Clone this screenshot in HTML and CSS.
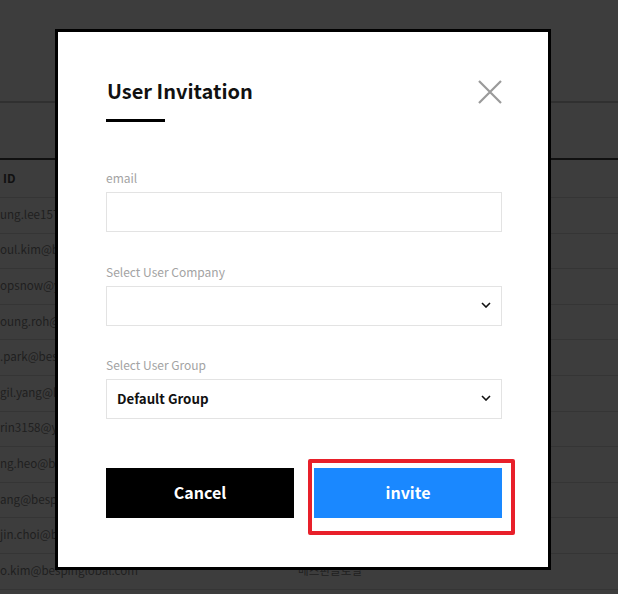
FILE: index.html
```html
<!DOCTYPE html>
<html lang="en">
<head>
<meta charset="utf-8">
<title>User Invitation</title>
<link rel="stylesheet" href="styles.css">
</head>
<body>
<div class="page">
  <div class="topbar"></div>
  <div class="toolbar"></div>
  <div class="thead"><span class="th">ID</span></div>
  <div class="row"><span class="cell">ung.lee157</span><span class="cell"></span></div>
  <div class="row"><span class="cell">oul.kim@b</span><span class="cell"></span></div>
  <div class="row"><span class="cell">opsnow@y</span><span class="cell"></span></div>
  <div class="row"><span class="cell">oung.roh@</span><span class="cell"></span></div>
  <div class="row"><span class="cell">.park@bes</span><span class="cell"></span></div>
  <div class="row"><span class="cell">gil.yang@b</span><span class="cell"></span></div>
  <div class="row"><span class="cell">rin3158@y</span><span class="cell"></span></div>
  <div class="row"><span class="cell">ng.heo@be</span><span class="cell"></span></div>
  <div class="row"><span class="cell">ang@besp</span><span class="cell"></span></div>
  <div class="row"><span class="cell">jin.choi@b</span><span class="cell"></span></div>
  <div class="row"><span class="cell">o.kim@bespinglobal.com</span><span class="cell">베스핀글로벌</span></div>
</div>

<div class="modal">
  <div class="modal-head">
    <h1 class="title">User Invitation</h1>
    <svg class="close" width="24" height="24" viewBox="0 0 24 24"><path d="M1 1L23 23M23 1L1 23" stroke="#9a9a9a" stroke-width="2.2" fill="none"/></svg>
  </div>
  <div class="title-bar"></div>

  <div class="field first">
    <label class="label">email</label>
    <div class="input"></div>
  </div>
  <div class="field">
    <label class="label">Select User Company</label>
    <div class="input select">
      <span class="value"></span>
      <svg class="chev" width="10" height="6" viewBox="0 0 10 6"><path d="M1 1L5 5L9 1" stroke="#111" stroke-width="1.6" fill="none"/></svg>
    </div>
  </div>
  <div class="field last">
    <label class="label">Select User Group</label>
    <div class="input select">
      <span class="value">Default Group</span>
      <svg class="chev" width="10" height="6" viewBox="0 0 10 6"><path d="M1 1L5 5L9 1" stroke="#111" stroke-width="1.6" fill="none"/></svg>
    </div>
  </div>

  <div class="buttons">
    <button class="btn cancel">Cancel</button>
    <div class="invite-wrap">
      <button class="btn invite">invite</button>
      <div class="highlight"></div>
    </div>
  </div>
</div>
</body>
</html>
```
FILE: styles.css
```css
* { box-sizing: border-box; }
html, body {
  margin: 0;
  padding: 0;
}
body {
  width: 618px;
  height: 594px;
  overflow: hidden;
  background: #3d3d3d;
  font-family: "Noto Sans CJK KR", "Noto Sans", sans-serif;
  position: relative;
}
.page {
  width: 618px;
  height: 594px;
  overflow: hidden;
}
.topbar {
  height: 103px;
  border-bottom: 2px solid #303030;
}
.toolbar {
  height: 57px;
  border-bottom: 2px solid #101010;
}
.thead {
  height: 38px;
  border-bottom: 1px solid #353535;
  display: flex;
  align-items: center;
  padding-left: 3px;
}
.th {
  font-size: 12px;
  font-weight: 700;
  color: #111;
  margin-top: -2px;
}
.row {
  height: 35.6px;
  border-bottom: 1px solid #353535;
  display: grid;
  grid-template-columns: 298px 1fr;
  align-items: center;
}
.cell {
  font-size: 11.6px;
  color: #1f1f1f;
  white-space: nowrap;
  margin-top: -3px;
}

.modal {
  position: absolute;
  left: 55px;
  top: 29px;
  width: 496px;
  height: 541px;
  background: #fff;
  border: 3px solid #000;
  padding: 43px 45px 0 48px;
}
.modal-head {
  display: flex;
  justify-content: space-between;
  align-items: flex-start;
  height: 32px;
}
.title {
  margin: 0;
  font-size: 20px;
  line-height: 32px;
  font-weight: 700;
  color: #111;
  padding-left: 1px;
}
.close {
  margin-top: 5px;
  margin-right: 1px;
}
.title-bar {
  margin-top: 12px;
  width: 59px;
  height: 3px;
  background: #000;
}
.field {
  margin-top: 30px;
}
.field.first {
  margin-top: 46px;
}
.field.last {
  margin-top: 29px;
}
.label {
  display: block;
  font-size: 12px;
  line-height: 20px;
  color: #a3a3a3;
  margin-bottom: 4px;
}
.input {
  width: 396px;
  height: 40px;
  border: 1px solid #e3e3e3;
  background: #fff;
}
.select {
  display: flex;
  align-items: center;
  justify-content: space-between;
  padding: 0 10px 0 10px;
}
.value {
  font-size: 13.3px;
  font-weight: 700;
  color: #111;
  margin-top: -2px;
}
.chev {
  margin-top: -3px;
}
.buttons {
  margin-top: 49px;
  display: flex;
  gap: 20px;
  width: 396px;
}
.btn {
  border: 0;
  width: 188px;
  height: 50px;
  font-family: inherit;
  font-size: 16px;
  font-weight: 700;
  color: #fff;
  padding: 0 0 2px;
}
.cancel {
  background: #000;
}
.invite-wrap {
  position: relative;
}
.invite {
  background: #1a88ff;
}
.highlight {
  position: absolute;
  left: -6px;
  top: -9px;
  width: 207px;
  height: 76px;
  border: 4px solid #e8202a;
  border-radius: 2px;
}
```
